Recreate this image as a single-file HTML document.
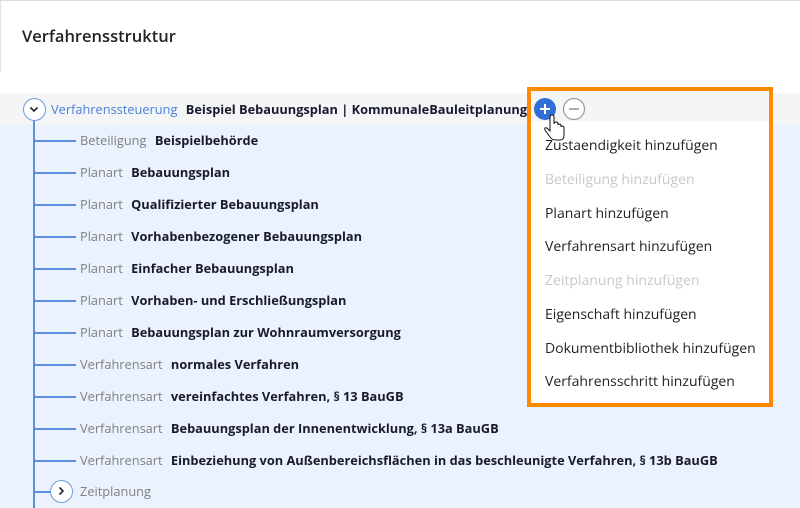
<!DOCTYPE html>
<html><head><style>
body{margin:0;width:800px;height:508px;overflow:hidden;background:#fff;font-family:"Open Sans","Liberation Sans",sans-serif;position:relative}
.hdr{position:absolute;left:0;top:0;width:800px;height:72px;border-top:1px solid #dcdcdc;border-left:1px solid #e3e3e3;box-sizing:border-box}
.hdr h1{position:absolute;left:21px;top:23px;margin:0;font-size:16.5px;font-weight:600;color:#222}
.r1{position:absolute;left:0;top:93px;width:800px;height:32px;background:#f4f5f7}
.blue{position:absolute;left:0;top:125px;width:800px;height:383px;background:#eaf2fd}
.vl{position:absolute;left:33px;top:120px;width:2px;height:388px;background:#5b8fdc}
.row{position:absolute;left:80px;font-size:12.8px;white-space:nowrap;line-height:16px}
.row .l{color:#808080;margin-right:5px}
.row b{color:#1a1a2e;font-weight:bold}
.h{position:absolute;left:35px;width:41px;height:1.5px;background:#5b8fdc}
.circ{position:absolute;border:1.5px solid #6d9be0;border-radius:50%;background:#fff;box-sizing:border-box}
.box{position:absolute;left:527px;top:87px;width:246px;height:320px;border:4px solid #ff8a00;box-sizing:border-box;background:#fff}
.box .top{position:absolute;left:0;top:0;width:238px;height:30px;background:#f4f5f7}
.mi{position:absolute;left:14px;font-size:14px;color:#222;white-space:nowrap}
.dis{color:#c8c8c8}
</style></head><body>
<div class="hdr"><h1>Verfahrensstruktur</h1></div>
<div class="r1"></div>
<div class="blue"></div>
<div class="vl"></div>
<div class="circ" style="left:23px;top:98px;width:23px;height:23px"><svg width="20" height="20" viewBox="0 0 20 20" style="position:absolute;left:0;top:0"><path d="M6.5 8.5 L10 12 L13.5 8.5" fill="none" stroke="#223" stroke-width="1.6"/></svg></div>
<div class="row" style="left:51px;top:101px"><span class="l" style="color:#4a80d6">Verfahrenssteuerung</span> <b>Beispiel Bebauungsplan | KommunaleBauleitplanung</b></div>

<div class="h" style="top:140px"></div><div class="row" style="top:132px"><span class="l">Beteiligung</span> <b>Beispielbehörde</b></div>
<div class="h" style="top:172px"></div><div class="row" style="top:164px"><span class="l">Planart</span> <b>Bebauungsplan</b></div>
<div class="h" style="top:204px"></div><div class="row" style="top:196px"><span class="l">Planart</span> <b>Qualifizierter Bebauungsplan</b></div>
<div class="h" style="top:236px"></div><div class="row" style="top:228px"><span class="l">Planart</span> <b>Vorhabenbezogener Bebauungsplan</b></div>
<div class="h" style="top:268px"></div><div class="row" style="top:260px"><span class="l">Planart</span> <b>Einfacher Bebauungsplan</b></div>
<div class="h" style="top:300px"></div><div class="row" style="top:292px"><span class="l">Planart</span> <b>Vorhaben- und Erschließungsplan</b></div>
<div class="h" style="top:332px"></div><div class="row" style="top:324px"><span class="l">Planart</span> <b>Bebauungsplan zur Wohnraumversorgung</b></div>
<div class="h" style="top:364px"></div><div class="row" style="top:356px"><span class="l">Verfahrensart</span> <b>normales Verfahren</b></div>
<div class="h" style="top:396px"></div><div class="row" style="top:388px"><span class="l">Verfahrensart</span> <b>vereinfachtes Verfahren, § 13 BauGB</b></div>
<div class="h" style="top:428px"></div><div class="row" style="top:420px"><span class="l">Verfahrensart</span> <b>Bebauungsplan der Innenentwicklung, § 13a BauGB</b></div>
<div class="h" style="top:460px"></div><div class="row" style="top:452px"><span class="l">Verfahrensart</span> <b>Einbeziehung von Außenbereichsflächen in das beschleunigte Verfahren, § 13b BauGB</b></div>
<div class="h" style="top:491px;width:16px"></div>
<div class="circ" style="left:50px;top:480px;width:23px;height:23px"><svg width="20" height="20" viewBox="0 0 20 20" style="position:absolute;left:0;top:0"><path d="M8.5 6.5 L12 10 L8.5 13.5" fill="none" stroke="#223" stroke-width="1.6"/></svg></div>
<div class="row" style="top:483px;left:80px"><span class="l">Zeitplanung</span></div>

<div class="box">
<div class="top"></div>
<div class="mi" style="top:45px">Zustaendigkeit hinzufügen</div>
<div class="mi dis" style="top:79px">Beteiligung hinzufügen</div>
<div class="mi" style="top:113px">Planart hinzufügen</div>
<div class="mi" style="top:146px">Verfahrensart hinzufügen</div>
<div class="mi dis" style="top:180px">Zeitplanung hinzufügen</div>
<div class="mi" style="top:214px">Eigenschaft hinzufügen</div>
<div class="mi" style="top:248px">Dokumentbibliothek hinzufügen</div>
<div class="mi" style="top:281px">Verfahrensschritt hinzufügen</div>
</div>
<svg style="position:absolute;left:530px;top:96px" width="70" height="50" viewBox="530 96 70 50">
<circle cx="545" cy="109" r="11" fill="#2f6fd6"/>
<path d="M540 109 H550 M545 104 V114" stroke="#fff" stroke-width="2"/>
<circle cx="574" cy="109" r="10.5" fill="#fff" stroke="#9a9a9a" stroke-width="1.2"/>
<path d="M569 109 H579" stroke="#888" stroke-width="1.4"/>
<path d="M550 117 v14 l-3 -3 q-3 -1 -2 2 l5 7 q2 3 6 3 h4 q4 0 4 -5 v-7 q0 -2 -2 -2 q-1 0 -1 1 v-1 q0 -2 -2 -2 q-1 0 -1 1 v-1 q0 -2 -2 -2 q-2 0 -2 2 v-7 q0 -2 -2 -2 q-2 0 -2 2z" fill="#fff" stroke="#111" stroke-width="1"/>
</svg>
</body></html>
